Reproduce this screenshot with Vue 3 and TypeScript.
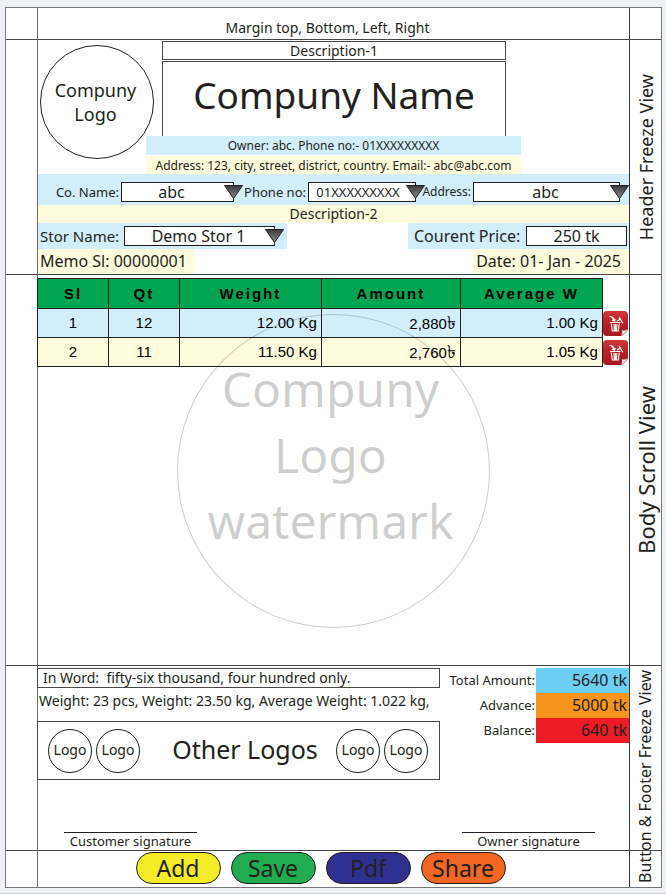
<script setup lang="ts">
import { ref } from 'vue'

interface Row {
  sl: number
  qt: number
  weight: string
  amount: string
  average: string
}

const rows = ref<Row[]>([
  { sl: 1, qt: 12, weight: '12.00 Kg', amount: '2,880', average: '1.00 Kg' },
  { sl: 2, qt: 11, weight: '11.50 Kg', amount: '2,760', average: '1.05 Kg' },
])

const totals = [
  { label: 'Total Amount:', value: '5640 tk', tone: 'sky' },
  { label: 'Advance:', value: '5000 tk', tone: 'orange' },
  { label: 'Balance:', value: '640 tk', tone: 'red' },
]

const actions = [
  { label: 'Add', tone: 'yellow' },
  { label: 'Save', tone: 'green' },
  { label: 'Pdf', tone: 'indigo' },
  { label: 'Share', tone: 'coral' },
]

const price = ref('250 tk')

function removeRow(sl: number) {
  rows.value = rows.value.filter((row) => row.sl !== sl)
}
</script>

<template>
  <div class="page">
    <svg class="defs" width="0" height="0" aria-hidden="true">
      <defs>
        <linearGradient id="arrow-fill" x1="0" y1="0" x2="0" y2="1">
          <stop offset="0" stop-color="#3a3a3c" />
          <stop offset="1" stop-color="#8a8b8e" />
        </linearGradient>
        <linearGradient id="trash-fill" x1="0" y1="0" x2="0" y2="1">
          <stop offset="0" stop-color="#cf3a3c" />
          <stop offset="0.5" stop-color="#b81f25" />
          <stop offset="1" stop-color="#a8181e" />
        </linearGradient>
      </defs>
    </svg>
    <main class="sheet">
      <div class="cell edge top"></div>
      <div class="cell top margin-note">Margin top, Bottom, Left, Right</div>
      <div class="cell top side"></div>

      <div class="cell edge"></div>
      <header class="cell head">
        <div class="brand">
          <div class="logo">Compuny<br />Logo</div>
          <div class="brand-main">
            <div class="box desc">Description-1</div>
            <h1 class="box name">Compuny Name</h1>
            <p class="strip blue">Owner: abc. Phone no:- 01XXXXXXXXX</p>
            <p class="strip cream">Address: 123, city, street, district, country. Email:- abc@abc.com</p>
          </div>
        </div>
        <div class="fields blue">
          <label for="co-name">Co. Name:</label>
          <div class="pick">
            <select id="co-name"><option>abc</option></select>
            <svg class="arrow" viewBox="0 0 19 14"><path d="M.5.5h18l-9 13z" /></svg>
          </div>
          <label for="phone">Phone no:</label>
          <div class="pick phone">
            <select id="phone"><option>01XXXXXXXXX</option></select>
            <svg class="arrow" viewBox="0 0 19 14"><path d="M.5.5h18l-9 13z" /></svg>
          </div>
          <label for="address" class="small">Address:</label>
          <div class="pick wide">
            <select id="address"><option>abc</option></select>
            <svg class="arrow" viewBox="0 0 19 14"><path d="M.5.5h18l-9 13z" /></svg>
          </div>
        </div>
        <div class="desc2 cream">Description-2</div>
        <div class="split">
          <div class="store blue">
            <label for="store">Stor Name:</label>
            <div class="pick wide">
              <select id="store"><option>Demo Stor 1</option></select>
              <svg class="arrow" viewBox="0 0 19 14"><path d="M.5.5h18l-9 13z" /></svg>
            </div>
          </div>
          <div class="price blue">
            <label for="price">Courent Price:</label>
            <input id="price" v-model="price" type="text" />
          </div>
        </div>
        <div class="split">
          <div class="memo cream">Memo Sl: 00000001</div>
          <div class="date cream">Date: 01- Jan - 2025</div>
        </div>
      </header>
      <div class="cell side"><span class="turn">Header Freeze View</span></div>

      <div class="cell edge"></div>
      <section class="cell body">
        <table>
          <colgroup>
            <col class="c-small" /><col class="c-small" /><col class="c-wide" />
            <col class="c-mid" /><col class="c-wide" /><col />
          </colgroup>
          <thead>
            <tr>
              <th>Sl</th><th>Qt</th><th>Weight</th><th>Amount</th><th>Average W</th>
              <td class="tool"></td>
            </tr>
          </thead>
          <tbody>
            <tr v-for="row in rows" :key="row.sl">
              <td>{{ row.sl }}</td>
              <td>{{ row.qt }}</td>
              <td class="num">{{ row.weight }}</td>
              <td class="num">{{ row.amount }}<span class="taka">৳</span></td>
              <td class="num">{{ row.average }}</td>
              <td class="tool">
                <button type="button" class="trash" :aria-label="`Delete row ${row.sl}`" @click="removeRow(row.sl)">
                  <svg viewBox="0 0 25 25">
                    <path d="M4 0h17a4 4 0 0 1 4 4v15l-6 6H4a4 4 0 0 1-4-4V4a4 4 0 0 1 4-4z" fill="url(#trash-fill)" />
                    <path d="M18.500 25q1.200-3 .5-5.500 3 .6 6-1z" fill="#f1eeee" stroke="#b9b3b3" stroke-width=".4" />
                    <path d="M7 11.500h10.500M8.300 12.500l1 7.500h6l1-7.500M10.900 13l.4 6.500M12.400 13v6.500M13.900 13l-.4 6.500" fill="none" stroke="#fff" stroke-width="1.100" />
                    <path d="M5.500 5c3.500-.3 5.500 1 6.300 3.400l1.600-.5-2 3-3-1.700 1.500-.4C9.200 7 7.800 6 5.500 5z" fill="#fff" />
                    <path d="M14 10.200l4-2.800M16 6.200l3.800 6" fill="none" stroke="#fff" stroke-width="1.200" />
                  </svg>
                </button>
              </td>
            </tr>
          </tbody>
        </table>
        <div class="watermark"><div class="ring">Compuny<br />Logo<br />watermark</div></div>
      </section>
      <div class="cell side"><span class="turn large">Body Scroll View</span></div>

      <div class="cell edge"></div>
      <section class="cell foot">
        <div class="summary">
          <div class="notes">
            <div class="words">In Word:&nbsp; fifty-six thousand, four hundred only.</div>
            <div class="weights">Weight: 23 pcs, Weight: 23.50 kg, Average Weight: 1.022 kg,</div>
            <div class="partners">
              <span class="mini">Logo</span>
              <span class="mini">Logo</span>
              <strong>Other Logos</strong>
              <span class="mini">Logo</span>
              <span class="mini">Logo</span>
            </div>
          </div>
          <dl class="totals">
            <template v-for="item in totals" :key="item.label">
              <dt>{{ item.label }}</dt>
              <dd :class="item.tone">{{ item.value }}</dd>
            </template>
          </dl>
        </div>
        <div class="signs">
          <div class="sign">Customer signature</div>
          <div class="sign">Owner signature</div>
        </div>
      </section>
      <div class="cell edge bottom"></div>
      <nav class="cell bottom actions">
        <button v-for="a in actions" :key="a.label" type="button" :class="a.tone">{{ a.label }}</button>
      </nav>
      <div class="cell side rule"></div>
      <div class="cell side bottom"></div>
      <div class="foot-label"><span class="turn">Button &amp; Footer Freeze View</span></div>
    </main>
  </div>
</template>

<style>
body {
  background: #eff0f4;
}
</style>

<style scoped>
* {
  box-sizing: border-box;
}
.page {
  display: flex;
  flex-direction: column;
  min-height: 100vh;
  padding: 7px 4px 5px 5px;
  border-bottom: 1px solid #c9cbdc;
  font-family: "Noto Sans", "Open Sans", sans-serif;
  font-size: 14px;
  line-height: 18px;
  color: #231f20;
}
.defs {
  position: absolute;
}
.sheet {
  flex: 1;
  display: grid;
  grid-template-columns: 32px minmax(0, 1fr) 32px;
  grid-template-rows: 32px auto 1fr auto 36px;
  background: #fff;
  border: 1px solid #77787b;
}
.cell {
  border-bottom: 1px solid #4a4849;
}
.edge {
  grid-column: 1;
  border-right: 1px solid #6d6e71;
}
.side {
  grid-column: 3;
  border-left: 1px solid #3c3a3b;
  display: flex;
  align-items: center;
  justify-content: center;
}
.bottom {
  grid-row: 5;
  border-bottom: 0;
}
.rule {
  grid-row: 4;
}
.margin-note {
  display: flex;
  align-items: center;
  justify-content: center;
  padding: 8px 12px 0 0;
}
.turn {
  writing-mode: vertical-rl;
  transform: rotate(180deg);
  font-size: 18px;
  line-height: 24px;
  white-space: nowrap;
}
.large {
  font-size: 22px;
}
.foot-label {
  grid-area: 4 / 3 / 6 / 4;
  display: flex;
  align-items: center;
  justify-content: center;
}
.foot-label .turn {
  font-size: 16px;
}
.blue {
  background: #d2eefb;
}
.cream {
  background: #fffbdc;
}

.brand {
  display: grid;
  grid-template-columns: minmax(0, 1fr) 375px minmax(0, 1fr);
}
.logo {
  display: flex;
  align-items: center;
  justify-content: center;
  width: 114px;
  height: 114px;
  margin: 5px 0 0 2px;
  padding-right: 3px;
  border: 1px solid #231f20;
  border-radius: 50%;
  text-align: center;
  font-size: 18px;
  line-height: 24px;
}
.brand-main {
  padding-top: 1px;
  text-align: center;
}
.box {
  margin: 0 15px 0 16px;
  border: 1px solid #4a4849;
}
.desc {
  height: 19px;
}
.name {
  height: 75px;
  margin-top: 1px;
  border-bottom: 0;
  font-size: 37px;
  font-weight: 400;
  line-height: 66px;
}
.strip {
  height: 19px;
  margin: 0;
  font-size: 12px;
  line-height: 19px;
}
.strip + .strip {
  height: 18px;
  margin-top: 1px;
}
.fields {
  display: grid;
  grid-template-columns: 83px 113fr 74px 108fr 57px 147fr;
  align-items: center;
  height: 31px;
  padding: 4px 9px 0 0;
  font-size: 13px;
}
.fields label {
  padding-right: 2px;
  text-align: right;
  white-space: nowrap;
}
.fields .small {
  font-size: 12px;
}
.pick {
  position: relative;
  display: flex;
}
select,
input {
  width: 100%;
  height: 20px;
  margin: 0;
  padding: 0 12px 0 0;
  appearance: none;
  border: 1px solid #231f20;
  border-radius: 0;
  background: #fff;
  color: inherit;
  font: inherit;
  font-size: 16px;
  line-height: 18px;
  text-align: center;
  text-align-last: center;
}
.phone select {
  padding-right: 8px;
  font-size: 13px;
}
.wide select {
  padding-right: 2px;
}
.arrow {
  position: absolute;
  top: 3px;
  right: -9px;
  width: 19px;
  height: 14px;
  fill: url(#arrow-fill);
  stroke: #231f20;
  stroke-width: 1;
  pointer-events: none;
}
.desc2 {
  height: 18px;
  text-align: center;
}
.split {
  display: flex;
  justify-content: space-between;
  font-size: 16px;
}
.store,
.price {
  display: grid;
  align-items: center;
  height: 26px;
  padding-left: 2px;
  white-space: nowrap;
}
.store {
  grid-template-columns: 84px 1fr;
  width: 249px;
  padding-right: 12px;
}
.store label {
  font-size: 15px;
}
.price {
  grid-template-columns: 112px 1fr;
  width: 221px;
  padding: 0 2px 0 6px;
}
.price input {
  padding: 0;
}
.memo,
.date {
  height: 25px;
  line-height: 24px;
}
.memo {
  width: 156px;
  padding-left: 2px;
}
.date {
  width: 156px;
  padding-right: 8px;
  text-align: right;
}

.body {
  position: relative;
  padding-top: 3px;
}
table {
  width: calc(100% + 1px);
  margin-left: -1px;
  table-layout: fixed;
  border-collapse: collapse;
  font-family: "Liberation Sans", Arial, sans-serif;
  font-size: 15px;
  color: #000;
  text-align: center;
}
.c-small {
  width: 12%;
}
.c-wide {
  width: 24%;
}
.c-mid {
  width: 23.5%;
}
th,
td {
  height: 29px;
  padding: 0;
  border: 1px solid #231f20;
}
th {
  height: 30px;
  background: #00a551;
  letter-spacing: 2px;
}
tbody tr {
  background: #d2eefb;
}
tbody tr:nth-child(even) {
  background: #fffbdc;
}
td.num {
  padding-right: 4px;
  text-align: right;
}
.taka {
  font-size: 18px;
  line-height: 18px;
}
td.tool {
  border: 0;
  border-left: 1px solid #231f20;
  background: #fff;
}
.trash {
  display: block;
  width: 25px;
  height: 25px;
  padding: 0;
  border: 0;
  background: none;
  cursor: pointer;
}
.trash svg {
  display: block;
}
.watermark {
  position: absolute;
  inset: 39px 0 auto;
  display: flex;
  justify-content: center;
  pointer-events: none;
}
.ring {
  width: 313px;
  height: 314px;
  padding: 41px 6px 0 0;
  border: 1px solid rgba(35, 31, 32, 0.22);
  border-radius: 50%;
  color: rgba(35, 31, 32, 0.22);
  font-size: 48px;
  line-height: 66px;
  text-align: center;
}

.foot {
  display: flex;
  flex-direction: column;
  justify-content: space-between;
  min-height: 185px;
  padding-top: 2px;
}
.summary {
  display: flex;
  justify-content: space-between;
}
.notes {
  width: 403px;
  margin-left: -1px;
}
.words,
.partners {
  border: 1px solid #4a4849;
}
.words {
  height: 20px;
  padding-left: 5px;
  line-height: 17px;
}
.weights {
  height: 33px;
  padding: 4px 0 0 2px;
  white-space: nowrap;
}
.partners {
  display: flex;
  align-items: center;
  gap: 4px;
  height: 59px;
  padding: 0 11px 0 10px;
}
.partners strong {
  flex: 1;
  padding: 0 0 4px 14px;
  font-size: 25px;
  font-weight: 400;
  line-height: 32px;
  text-align: center;
}
.mini {
  width: 44px;
  height: 44px;
  border: 1px solid #231f20;
  border-radius: 50%;
  line-height: 40px;
  text-align: center;
}
.totals {
  display: grid;
  grid-template-columns: auto 93px;
  grid-auto-rows: 25px;
  margin: 0;
  line-height: 24px;
  text-align: right;
}
.totals dt {
  padding-right: 1px;
  font-size: 13px;
}
.totals dd {
  margin: 0;
  padding-right: 2px;
  font-size: 16px;
}
.sky {
  background: #6dcff6;
}
.orange {
  background: #f7941e;
}
.red {
  background: #ed1c24;
}
.signs {
  display: flex;
  justify-content: space-between;
  padding: 0 34px 0 26px;
}
.sign {
  width: 133px;
  height: 18px;
  border-top: 1px solid #231f20;
  font-size: 13px;
  line-height: 16px;
  text-align: center;
}
.actions {
  grid-column: 2;
  display: flex;
  align-items: flex-start;
  justify-content: center;
  gap: 10px;
  padding: 1px 26px 0 0;
}
.actions button {
  width: 85px;
  height: 32px;
  padding: 0;
  border: 1px solid #231f20;
  border-radius: 16px;
  color: inherit;
  font: inherit;
  font-size: 23px;
  line-height: 30px;
}
.actions .yellow {
  background: #f3ec27;
}
.actions .green {
  background: #21ac50;
}
.actions .indigo {
  background: #2f3191;
}
.actions .coral {
  background: #f26622;
}
</style>
